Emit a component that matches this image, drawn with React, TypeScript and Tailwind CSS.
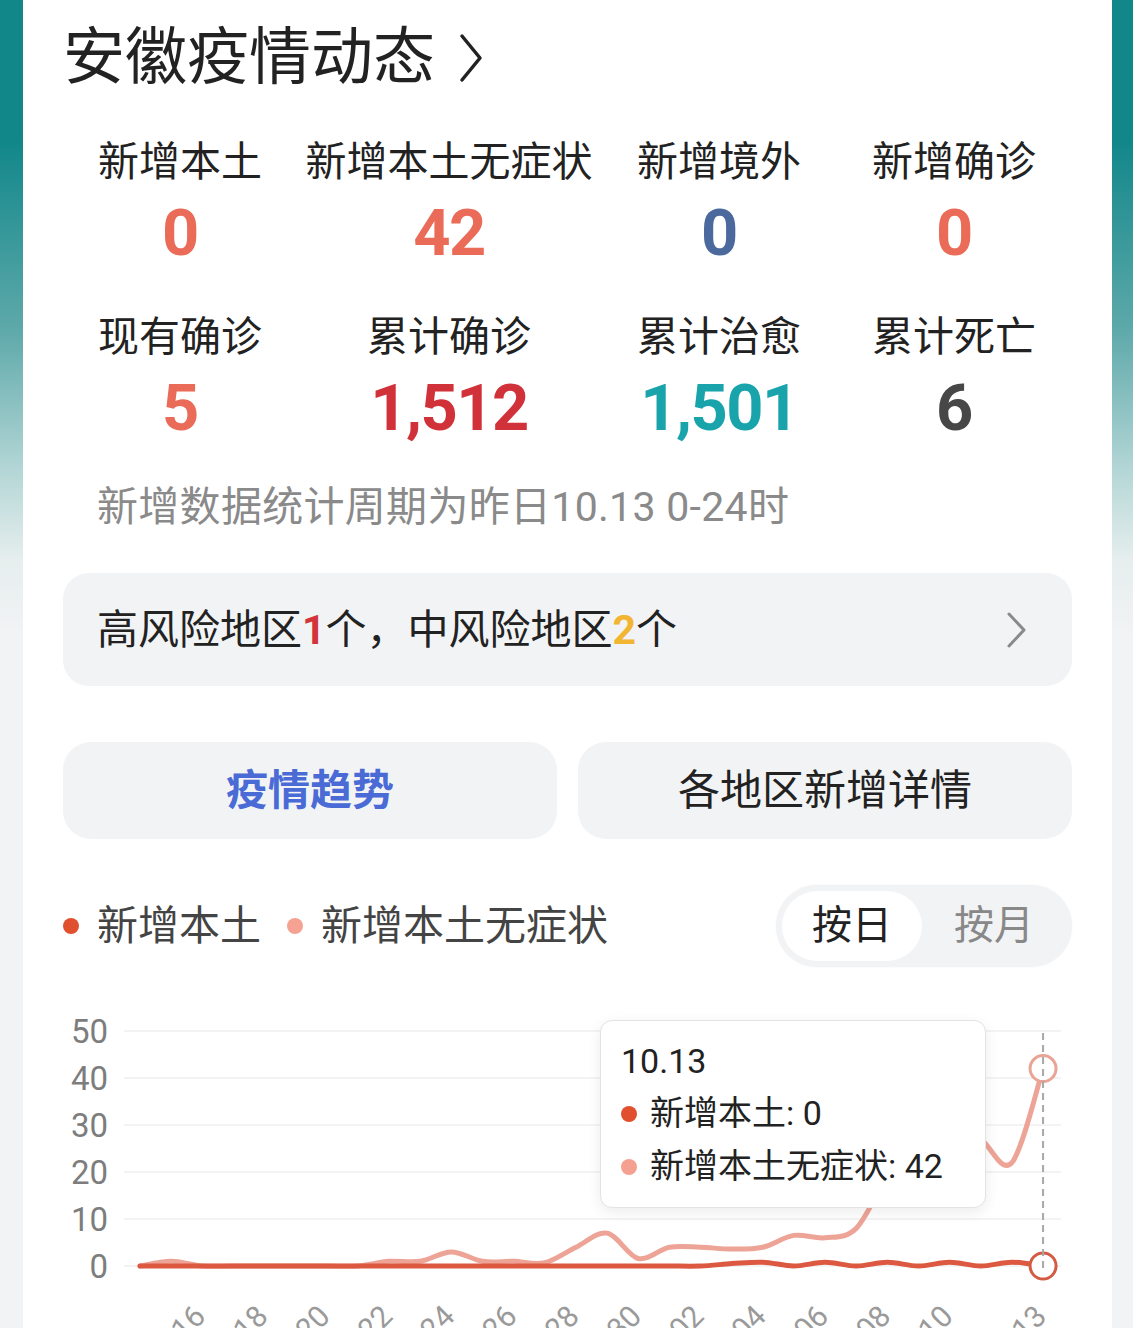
import React from "react";

const stats1 = [
  { label: "新增本土", value: "0", color: "text-[#ea6c58]" },
  { label: "新增本土无症状", value: "42", color: "text-[#ea6c58]" },
  { label: "新增境外", value: "0", color: "text-[#4b699d]" },
  { label: "新增确诊", value: "0", color: "text-[#ea6c58]" },
];
const stats2 = [
  { label: "现有确诊", value: "5", color: "text-[#ea6c58]" },
  { label: "累计确诊", value: "1,512", color: "text-[#d1323a]" },
  { label: "累计治愈", value: "1,501", color: "text-[#19a3ab]" },
  { label: "累计死亡", value: "6", color: "text-[#474747]" },
];

const salmon = [0, 1, 0, 0, 0, 0, 0, 0, 1, 1, 3, 1, 1, 0.7, 4, 7, 1.6, 4, 4, 3.6, 4, 6.5, 6, 8, 19, 26, 31, 27, 22, 42];
const dark = [0, 0, 0, 0, 0, 0, 0, 0, 0, 0, 0, 0, 0, 0, 0, 0, 0, 0, 0, 0.5, 0.8, 0, 0.8, 0, 0.8, 0, 0.8, 0, 0.8, 0];

const X0 = 117;
const STEP = 31.14;
const Y0 = 276;
const UNIT = 4.7;

function pts(vals: number[]): [number, number][] {
  return vals.map((v, i) => [X0 + STEP * i, Y0 - v * UNIT]);
}

function smoothPath(p: [number, number][]) {
  let d = `M${p[0][0].toFixed(1)},${p[0][1].toFixed(1)}`;
  for (let i = 0; i < p.length - 1; i++) {
    const p0 = p[i - 1] || p[i];
    const p1 = p[i];
    const p2 = p[i + 1];
    const p3 = p[i + 2] || p2;
    const c1x = p1[0] + (p2[0] - p0[0]) / 6;
    const c1y = p1[1] + (p2[1] - p0[1]) / 6;
    const c2x = p2[0] - (p3[0] - p1[0]) / 6;
    const c2y = p2[1] - (p3[1] - p1[1]) / 6;
    d += ` C${c1x.toFixed(1)},${c1y.toFixed(1)} ${c2x.toFixed(1)},${c2y.toFixed(1)} ${p2[0].toFixed(1)},${p2[1].toFixed(1)}`;
  }
  return d;
}

const xLabels: [number, string][] = [
  [2, "09.16"],
  [4, "09.18"],
  [6, "09.20"],
  [8, "09.22"],
  [10, "09.24"],
  [12, "09.26"],
  [14, "09.28"],
  [16, "09.30"],
  [18, "10.02"],
  [20, "10.04"],
  [22, "10.06"],
  [24, "10.08"],
  [26, "10.10"],
  [29, "10.13"],
];

function StatRow({ items }: { items: typeof stats1 }) {
  return (
    <>
      {items.map((s) => (
        <div key={s.label} className="flex flex-col items-center">
          <div className="h-[48px] whitespace-nowrap text-[41px] leading-[48px] text-[#222]">{s.label}</div>
          <div className={`mt-[12px] h-[70px] text-[65px] font-bold leading-[70px] tracking-[-1.5px] ${s.color}`}>
            {s.value}
          </div>
        </div>
      ))}
    </>
  );
}

function Chart() {
  const gridYs = [41, 88, 135, 182, 229, 276];
  const gridLabels = ["50", "40", "30", "20", "10", "0"];
  const endX = X0 + STEP * 29;
  return (
    <div className="relative -mx-10 h-[338px]">
      <svg width="1089" height="338" className="block">
        {gridYs.map((y, i) => (
          <g key={y}>
            <line x1="101" x2="1038" y1={y} y2={y} stroke="#f3f3f3" strokeWidth="2" />
            <text
              x="85"
              y={y + 12}
              textAnchor="end"
              fontSize="33"
              fill="#7d7d7d"
              fontFamily="Roboto, 'Noto Sans', sans-serif"
            >
              {gridLabels[i]}
            </text>
          </g>
        ))}
        <path d={smoothPath(pts(salmon))} fill="none" stroke="#eda496" strokeWidth="5" strokeLinecap="round" strokeLinejoin="round" />
        <path d={smoothPath(pts(dark))} fill="none" stroke="#dc5840" strokeWidth="5" strokeLinecap="round" strokeLinejoin="round" />
        <circle cx={endX} cy={Y0 - 42 * UNIT} r="13" fill="#fff" stroke="#e9a496" strokeWidth="3" />
        <circle cx={endX} cy={Y0} r="13" fill="#fff" stroke="#d45a44" strokeWidth="3" />
        <line x1={endX} x2={endX} y1="43" y2="278" stroke="#a8a8a8" strokeWidth="2" strokeDasharray="7 5" />
        {xLabels.map(([i, t]) => {
          const x = X0 + STEP * i + 5;
          return (
            <text
              key={t}
              transform={`translate(${x.toFixed(1)},328) rotate(-45)`}
              textAnchor="end"
              fontSize="30"
              fill="#9a9a9a"
              fontFamily="Roboto, 'Noto Sans', sans-serif"
            >
              {t}
            </text>
          );
        })}
      </svg>
      <div className="absolute left-[577px] top-[30px] h-[188px] w-[386px] rounded-[12px] border border-[#e3e3e3] bg-white pl-[20px] pt-[18px] shadow-[0_4px_14px_rgba(0,0,0,0.08)]">
        <div className="h-[44px] text-[34px] leading-[44px] text-[#222]">10.13</div>
        <div className="mt-[4px] flex h-[53px] items-center">
          <span className="h-[16px] w-[16px] rounded-full bg-[#e0502f]" />
          <span className="ml-[13px] text-[34px] leading-[53px] text-[#222]">新增本土: 0</span>
        </div>
        <div className="flex h-[53px] items-center">
          <span className="h-[16px] w-[16px] rounded-full bg-[#f4a192]" />
          <span className="ml-[13px] text-[34px] leading-[53px] text-[#222]">新增本土无症状: 42</span>
        </div>
      </div>
    </div>
  );
}

export default function App() {
  return (
    <div className="h-[1328px] w-[1133px] overflow-hidden bg-[linear-gradient(to_bottom,#11878a_0px,#11878a_140px,#5ea9aa_330px,#b4d6d6_470px,#e6eeee_560px,#f2f3f5_640px)] font-['Roboto','Noto_Sans_CJK_SC',sans-serif]">
      <div className="ml-[23px] h-[1328px] w-[1089px] bg-white px-10">
        {/* Title */}
        <div className="flex h-[116px] items-center">
          <span className="text-[62px] leading-[72px] text-[#222]">安徽疫情动态</span>
          <svg width="24" height="50" viewBox="0 0 24 50" className="ml-[24px]">
            <polyline points="3,3 21,25 3,47" fill="none" stroke="#222" strokeWidth="3.5" strokeLinecap="round" strokeLinejoin="round" />
          </svg>
        </div>

        {/* Stats */}
        <div className="mt-[22px] grid grid-cols-[234px_304px_236px_234px] gap-y-[45px]">
          <StatRow items={stats1} />
          <StatRow items={stats2} />
        </div>

        {/* Footnote */}
        <div className="mt-[40px] h-[48px] pl-[34px] text-[41px] leading-[48px] tracking-[0.3px] text-[#8a8a8a]">
          新增数据统计周期为昨日10.13 0-24时
        </div>

        {/* Risk box */}
        <div className="mt-[42px] flex h-[113px] items-center justify-between rounded-[26px] bg-[#f2f3f5] pl-[34px] pr-[44px]">
          <div className="text-[41px] leading-[50px] text-[#222]">
            高风险地区<span className="font-bold text-[#d3343a]">1</span>个，中风险地区
            <span className="font-bold text-[#f1b531]">2</span>个
          </div>
          <svg width="22" height="38" viewBox="0 0 22 38">
            <polyline points="3,3 18,19 3,35" fill="none" stroke="#8a8a8a" strokeWidth="3" strokeLinecap="round" strokeLinejoin="round" />
          </svg>
        </div>

        {/* Tabs */}
        <div className="mt-[56px] grid h-[97px] grid-cols-2 gap-[21px]">
          <div className="flex items-center justify-center rounded-[28px] bg-[#f2f3f5] text-[42px] font-bold text-[#4a6bd5]">
            疫情趋势
          </div>
          <div className="flex items-center justify-center rounded-[28px] bg-[#f2f3f5] text-[42px] text-[#222]">
            各地区新增详情
          </div>
        </div>

        {/* Legend + toggle */}
        <div className="mt-[46px] flex h-[82px] items-center justify-between">
          <div className="flex items-center">
            <span className="h-[16px] w-[16px] rounded-full bg-[#e0502f]" />
            <span className="ml-[18px] text-[41px] leading-[50px] text-[#444]">新增本土</span>
            <span className="ml-[26px] h-[16px] w-[16px] rounded-full bg-[#f5a292]" />
            <span className="ml-[18px] text-[41px] leading-[50px] text-[#444]">新增本土无症状</span>
          </div>
          <div className="flex h-[82px] w-[296px] items-center rounded-full bg-[#f2f3f5] p-[6px] shadow-[0_0_2px_rgba(0,0,0,0.06)]">
            <div className="flex h-[70px] w-[140px] items-center justify-center rounded-full bg-white text-[40px] text-[#222]">
              按日
            </div>
            <div className="flex h-[70px] flex-1 items-center justify-center text-[40px] text-[#888]">按月</div>
          </div>
        </div>

        {/* Chart */}
        <div className="mt-[23px]">
          <Chart />
        </div>
      </div>
    </div>
  );
}
